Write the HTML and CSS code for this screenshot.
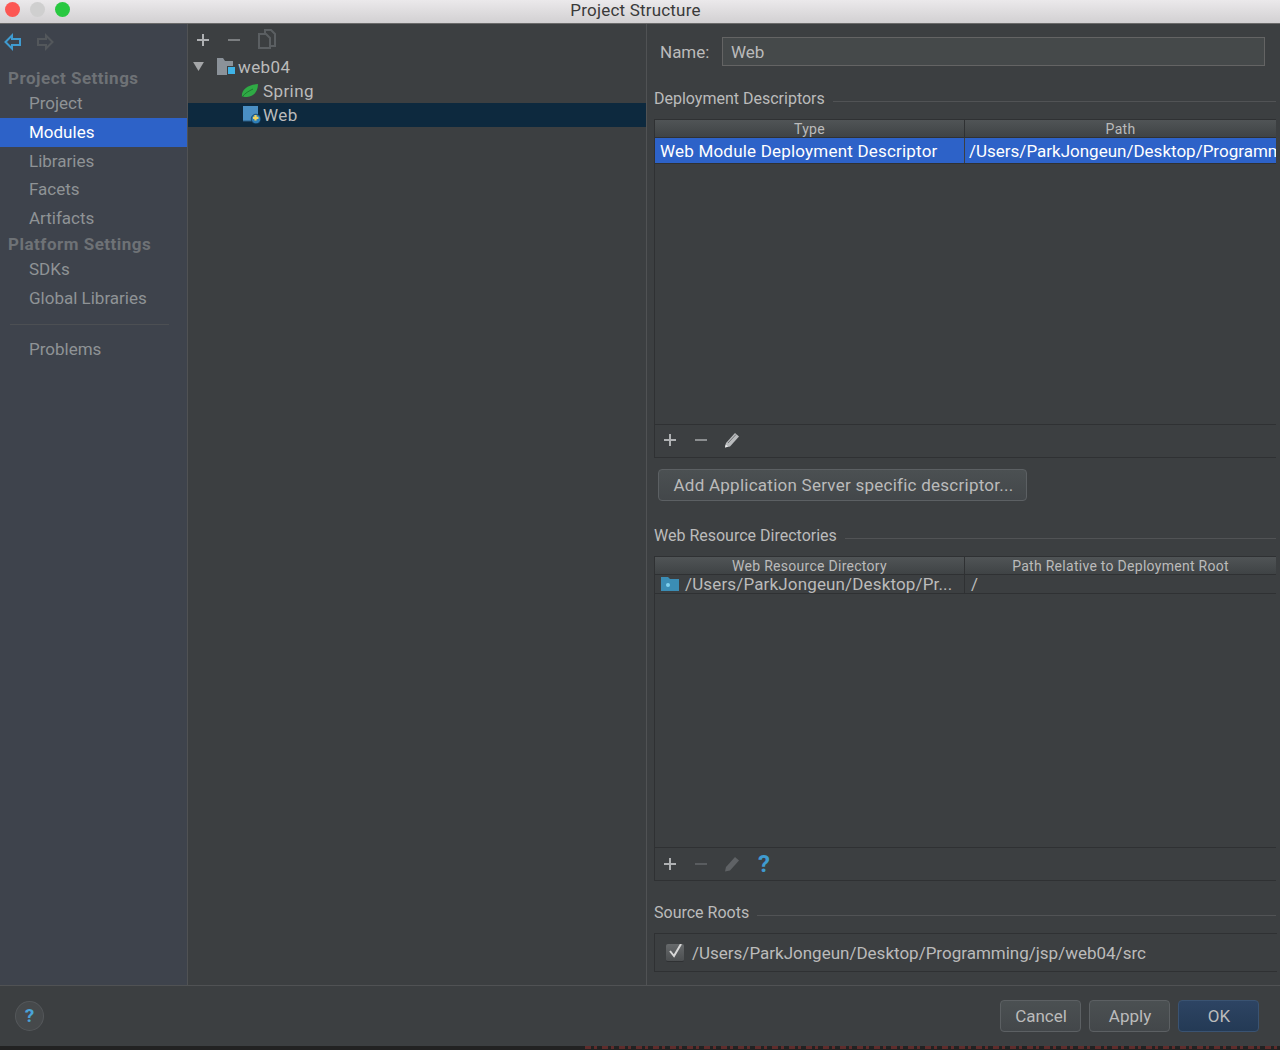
FILE: index.html
```html
<!DOCTYPE html>
<html lang="en">
<head>
    <meta charset="UTF-8">
    <title>Project Structure</title>
    <link rel="stylesheet" href="styles.css">
</head>
<body>
    <div class="titlebar">
        <div class="lights">
            <span class="light light-red"></span>
            <span class="light light-grey"></span>
            <span class="light light-green"></span>
        </div>
        <div class="window-title">Project Structure</div>
    </div>

    <div class="main">
        <div class="sidebar">
            <div class="nav-arrows">
                <svg width="18" height="18" viewBox="0 0 18 18"><path d="M8 2.500 1.500 9 8 15.500V12h8V6H8z" fill="none" stroke="#3f9bd0" stroke-width="2"/></svg>
                <svg width="18" height="18" viewBox="0 0 18 18"><path d="M10 2.500 16.500 9 10 15.500V12H2V6h8z" fill="none" stroke="#53575b" stroke-width="2"/></svg>
            </div>
            <div class="side-head">Project Settings</div>
            <div class="side-item">Project</div>
            <div class="side-item selected">Modules</div>
            <div class="side-item">Libraries</div>
            <div class="side-item">Facets</div>
            <div class="side-item">Artifacts</div>
            <div class="side-head side-head-2">Platform Settings</div>
            <div class="side-item">SDKs</div>
            <div class="side-item">Global Libraries</div>
            <div class="side-sep"></div>
            <div class="side-item">Problems</div>
        </div>

        <div class="tree">
            <div class="tree-tools">
                <svg width="16" height="16" viewBox="0 0 16 16"><path d="M8 2v12M2 8h12" stroke="#afb1b3" stroke-width="2"/></svg>
                <svg width="16" height="16" viewBox="0 0 16 16"><path d="M2 8h12" stroke="#7b7e80" stroke-width="2"/></svg>
                <svg class="copy-icon" width="20" height="20" viewBox="0 0 20 20"><path d="M8 4V1h6l4 4v12h-4M2 5h7l4 4v10H2z" fill="none" stroke="#5b5f62" stroke-width="2"/></svg>
            </div>
            <div class="tree-row tree-root">
                <svg class="caret" width="11" height="9" viewBox="0 0 12 10"><path d="M0 0h12L6 10z" fill="#a4a6a8"/></svg>
                <svg width="20" height="18" viewBox="0 0 20 18"><path d="M0 0h6l2 3h8v14H0z" fill="#8b9299"/><rect x="10.500" y="8.500" width="8" height="8" fill="#3fb3e6" stroke="#3c3f41"/></svg>
                <span>web04</span>
            </div>
            <div class="tree-row tree-child">
                <svg width="18" height="14" viewBox="0 0 18 14"><path d="M1 13C0 6 6 1 17 0c0 8-5 13-11 13-2 0-3 0-5-1z" fill="#2faa45"/><path d="M1 13C4 9 8 7 12 5" stroke="#1d7a30" fill="none"/></svg>
                <span>Spring</span>
            </div>
            <div class="tree-row tree-child active">
                <svg class="web-icon" width="18" height="18" viewBox="0 0 18 18"><rect x="0" y="0" width="15" height="15" fill="#4a8fc4"/><path d="M0 15h15" stroke="#2a5f88"/><circle cx="13" cy="13" r="4.800" fill="#2f7fb8" stroke="#0d293e" stroke-width=".6"/><path d="M10 11.800h5.500M12.500 9v5.500" stroke="#f2d45c" stroke-width="2.200"/></svg>
                <span>Web</span>
            </div>
        </div>

        <div class="detail">
            <div class="name-row">
                <label class="name-label">Name:</label>
                <div class="name-input">Web</div>
            </div>

            <div class="group-title group-first"><span>Deployment Descriptors</span><i></i></div>
            <div class="table table-desc">
                <div class="thead">
                    <div class="th col-a">Type</div>
                    <div class="th col-b">Path</div>
                </div>
                <div class="trow trow-sel">
                    <div class="td col-a">Web Module Deployment Descriptor</div>
                    <div class="td col-b">/Users/ParkJongeun/Desktop/Programming</div>
                </div>
                <div class="table-body"></div>
                <div class="table-tools">
                    <svg width="16" height="16" viewBox="0 0 16 16"><path d="M8 2v12M2 8h12" stroke="#afb1b3" stroke-width="2"/></svg>
                    <svg width="16" height="16" viewBox="0 0 16 16"><path d="M2 8h12" stroke="#8b8e90" stroke-width="2"/></svg>
                    <svg width="16" height="16" viewBox="0 0 16 16"><path d="M1 15.500l1-4.500 9-10 4 3.500-9 10z" fill="#b9bbbd"/><path d="M4 11l8-8.500" stroke="#6f7274"/><path d="M1 15.500l.7-3 2.300 2z" fill="#f0f0f0"/></svg>
                </div>
            </div>

            <button class="btn btn-wide">Add Application Server specific descriptor...</button>

            <div class="group-title group-second"><span>Web Resource Directories</span><i></i></div>
            <div class="table table-res">
                <div class="thead">
                    <div class="th col-a">Web Resource Directory</div>
                    <div class="th col-b">Path Relative to Deployment Root</div>
                </div>
                <div class="trow trow-plain">
                    <div class="td col-a">
                        <svg width="18" height="14" viewBox="0 0 18 14"><path d="M0 0h7l2 2h9v12H0z" fill="#3b8db5"/><circle cx="7" cy="8" r="2" fill="#7fd0ee"/></svg>
                        <span>/Users/ParkJongeun/Desktop/Pr...</span>
                    </div>
                    <div class="td col-b">/</div>
                </div>
                <div class="table-body"></div>
                <div class="table-tools">
                    <svg width="16" height="16" viewBox="0 0 16 16"><path d="M8 2v12M2 8h12" stroke="#afb1b3" stroke-width="2"/></svg>
                    <svg width="16" height="16" viewBox="0 0 16 16"><path d="M2 8h12" stroke="#595c5f" stroke-width="2"/></svg>
                    <svg width="16" height="16" viewBox="0 0 16 16"><path d="M1 15.500l1-4.500 9-10 4 3.500-9 10z" fill="#5f6265"/></svg>
                    <span class="help-mark">?</span>
                </div>
            </div>

            <div class="group-title group-third"><span>Source Roots</span><i></i></div>
            <div class="roots">
                <span class="check">
                    <svg width="18" height="18" viewBox="0 0 18 18"><path d="M4 7l4 5 7-12" fill="none" stroke="#d8d8d8" stroke-width="2"/></svg>
                </span>
                <span>/Users/ParkJongeun/Desktop/Programming/jsp/web04/src</span>
            </div>
        </div>
    </div>

    <div class="footer">
        <div class="help-round">?</div>
        <div class="footer-btns">
            <button class="btn">Cancel</button>
            <button class="btn">Apply</button>
            <button class="btn btn-ok">OK</button>
        </div>
    </div>
    <div class="behind"><div class="behind-log"></div></div>
</body>
</html>
```
FILE: styles.css
```css
* {
    box-sizing: border-box;
}
html, body {
    margin: 0;
    height: 1050px;
    overflow: hidden;
}
body {
    display: flex;
    flex-direction: column;
    background: #3c3f41;
    color: #bbbbbb;
    font-family: Roboto, "Noto Sans", sans-serif;
    font-size: 17px;
}
svg {
    display: block;
    flex: none;
}

/* title bar */
.titlebar {
    position: relative;
    height: 24px;
    flex: none;
    background: linear-gradient(#ebe9eb, #d2d0d2);
    border-bottom: 1px solid #6a6a6a;
    text-align: center;
    color: #3a3a3a;
    font-size: 17px;
    letter-spacing: 0.2px;
    line-height: 21px;
}
.window-title {
    margin-right: 9px;
}
.lights {
    position: absolute;
    top: 2px;
    left: 5px;
    display: flex;
    gap: 10px;
}
.light {
    width: 15px;
    height: 15px;
    border-radius: 50%;
}
.light-red { background: #fc5753; }
.light-grey { background: #cfcfcf; }
.light-green { background: #28c840; }

/* main panes */
.main {
    display: flex;
    flex: 1;
    min-height: 0;
}
.sidebar {
    width: 188px;
    flex: none;
    background: #3e434c;
    border-right: 1px solid #505254;
    color: #8f9396;
}
.nav-arrows {
    display: flex;
    gap: 14px;
    padding: 9px 0 0 4px;
    height: 41px;
}
.side-head {
    height: 24px;
    padding-left: 8px;
    line-height: 26px;
    font-weight: 700;
    letter-spacing: 0.5px;
    color: #6e7276;
}
.side-head-2 {
    height: 22px;
    line-height: 22px;
}
.side-item {
    height: 28.8px;
    padding-left: 29px;
    line-height: 28px;
}
.side-item.selected {
    background: #2d62c8;
    color: #ffffff;
}
.side-sep {
    height: 1px;
    margin: 11px 18px 10.4px 10px;
    background: #4c4f53;
}
.tree {
    width: 459px;
    flex: none;
    border-right: 1px solid #505254;
    letter-spacing: 0.4px;
}
.tree-tools {
    display: flex;
    align-items: center;
    gap: 15px;
    height: 31px;
    padding-left: 7px;
}
.copy-icon {
    margin-top: -2px;
}
.tree-row {
    display: flex;
    align-items: center;
    height: 24px;
}
.tree-root {
    padding-left: 5px;
}
.tree-root .caret {
    margin: -2px 13px 0 0;
}
.tree-root span {
    margin-left: 1px;
}
.tree-child {
    padding-left: 53px;
    gap: 4px;
}
.tree-child.active {
    background: #0d293e;
    gap: 2px;
}
.web-icon {
    margin-left: 2px;
}

/* right pane */
.detail {
    flex: 1;
    min-width: 0;
    padding-left: 7px;
    overflow: hidden;
}
.name-row {
    display: flex;
    align-items: center;
    height: 29px;
    margin-top: 13px;
    padding-left: 6px;
}
.name-label {
    width: 62px;
    flex: none;
}
.name-input {
    width: 543px;
    height: 29px;
    padding-left: 8px;
    line-height: 28px;
    background: #45494a;
    border: 1px solid #646464;
}
.group-title {
    display: flex;
    align-items: center;
    gap: 8px;
    height: 20px;
    font-size: 16px;
    width: 622px;
}
.group-title i {
    flex: 1;
    height: 1px;
    margin-top: 7px;
    background: #515355;
}
.group-first { margin-top: 22px; }
.group-second { margin-top: 24px; }
.group-third { margin-top: 21px; }

.table {
    display: flex;
    flex-direction: column;
    margin-right: 4px;
    border: 1px solid #2f3133;
    border-right: none;
}
.table-desc {
    height: 339px;
    margin-top: 11px;
}
.table-desc .table-tools {
    padding-bottom: 2px;
}
.table-res {
    height: 325px;
    margin-top: 11px;
}
.thead {
    display: flex;
    height: 18px;
    flex: none;
    background: linear-gradient(#505456, #3f4345);
    border-bottom: 1px solid #2f3133;
    font-size: 14px;
    letter-spacing: 0.28px;
    line-height: 18px;
    text-align: center;
}
.th {
    flex: none;
}
.th.col-a {
    border-right: 1px solid #2f3133;
}
.col-a {
    width: 310px;
    flex: none;
}
.col-b {
    flex: 1;
    min-width: 0;
    white-space: nowrap;
    overflow: hidden;
}
.trow {
    display: flex;
    flex: none;
}
.trow-sel {
    height: 26px;
    line-height: 26px;
    background: #2d62c8;
    color: #ffffff;
    border-bottom: 1px solid #2f3133;
}
.trow-sel .col-a {
    padding-left: 5px;
    letter-spacing: 0.2px;
    border-right: 1px solid #3c3f41;
}
.trow-sel .col-b {
    padding-left: 4px;
}
.trow-plain {
    height: 19px;
    line-height: 18px;
    letter-spacing: 0.15px;
    border-bottom: 1px solid #2f3133;
}
.trow-plain .col-a {
    display: flex;
    align-items: center;
    gap: 6px;
    padding-left: 6px;
    border-right: 1px solid #2f3133;
}
.trow-plain .col-b {
    padding-left: 6px;
}
.table-body {
    flex: 1;
    border-bottom: 1px solid #2f3133;
}
.table-tools {
    display: flex;
    align-items: center;
    gap: 15px;
    height: 32px;
    flex: none;
    padding-left: 7px;
}
.help-mark {
    color: #3f9bd0;
    font-size: 24px;
    font-weight: 700;
    margin-left: 3px;
}
.btn {
    height: 32px;
    padding: 0;
    background: linear-gradient(#4b5052, #43474a);
    border: 1px solid #5c6063;
    border-radius: 4px;
    color: #bbbbbb;
    font-family: inherit;
    font-size: 17px;
}
.btn-wide {
    display: block;
    width: 369px;
    margin: 11px 0 0 4px;
    padding-left: 2px;
    letter-spacing: 0.25px;
}
.roots {
    display: flex;
    align-items: center;
    gap: 8px;
    height: 39px;
    margin-top: 11px;
    margin-right: 3px;
    padding-left: 11px;
    border: 1px solid #2f3133;
    border-right: none;
}
.check {
    display: flex;
    width: 18px;
    height: 18px;
    background: linear-gradient(#66696b, #4c4f51);
    border-radius: 2px;
    border-bottom: 1px solid #2f3133;
}

/* footer */
.footer {
    display: flex;
    align-items: center;
    justify-content: space-between;
    height: 61px;
    flex: none;
    padding: 0 21px 0 15px;
    border-top: 1px solid #505254;
}
.help-round {
    width: 29px;
    height: 30px;
    border-radius: 50%;
    background: #46494b;
    border: 1px solid #54575a;
    color: #4aa3d8;
    font-size: 19px;
    font-weight: 700;
    line-height: 27px;
    text-align: center;
}
.footer-btns {
    display: flex;
    gap: 8px;
}
.footer-btns .btn {
    width: 81px;
    padding-left: 1px;
}
.footer-btns .btn-ok {
    background: linear-gradient(#2d4463, #243a55);
    border-color: #3a5372;
}

/* the terminal output behind the dialog */
.behind {
    display: flex;
    justify-content: flex-end;
    height: 4px;
    flex: none;
    background: #222222;
}
.behind-log {
    width: 695px;
    height: 3px;
    background: repeating-linear-gradient(90deg, #5f2c2b 0 6px, #222222 6px 9px, #5f2c2b 9px 12px, #222222 12px 17px);
}
```
